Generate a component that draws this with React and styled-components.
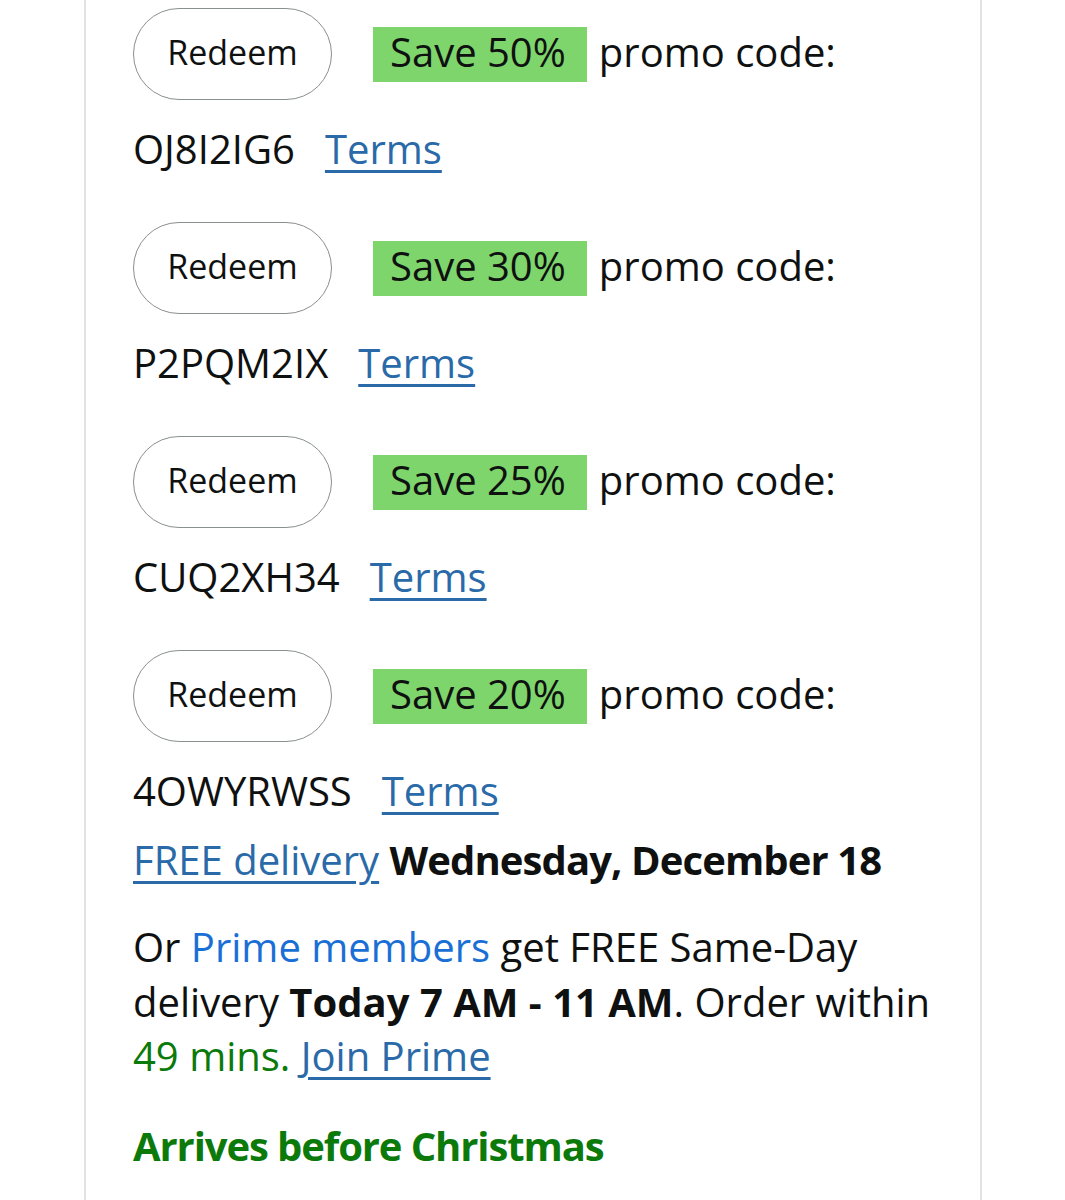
import React from 'react';
import styled, { createGlobalStyle } from 'styled-components';

const promos = [
  { save: 'Save 50%', code: 'OJ8I2IG6' },
  { save: 'Save 30%', code: 'P2PQM2IX' },
  { save: 'Save 25%', code: 'CUQ2XH34' },
  { save: 'Save 20%', code: '4OWYRWSS' },
];

const App = () => {
  return (
    <Page>
      <GlobalStyle />
      <Panel>
        <PromoList>
          {promos.map((promo) => (
            <Promo key={promo.code}>
              <PromoRow>
                <RedeemButton type='button'>Redeem</RedeemButton>
                <SaveBadge>{promo.save}</SaveBadge>
                <PromoLabel>promo code:</PromoLabel>
              </PromoRow>
              <CodeLine>
                <Code>{promo.code}</Code>
                <Link href='#'>Terms</Link>
              </CodeLine>
            </Promo>
          ))}
        </PromoList>
        <DeliveryLine>
          <Link href='#'>FREE delivery</Link> <DateText>Wednesday, December 18</DateText>
        </DeliveryLine>
        <PrimeText>
          Or <PrimeLink>Prime members</PrimeLink> get FREE Same-Day delivery{' '}
          <Bold>Today 7 AM - 11 AM</Bold>. Order within{' '}
          <GreenText>49 mins.</GreenText> <Link href='#'>Join Prime</Link>
        </PrimeText>
        <Arrives>Arrives before Christmas</Arrives>
      </Panel>
    </Page>
  );
};

const GlobalStyle = createGlobalStyle`
  body {
    margin: 0;
    background: #ffffff;
    font-family: "Open Sans", "Noto Sans", "Liberation Sans", sans-serif;
    color: #0f1111;
  }
`;

const Page = styled.div`
  height: 1200px;
  overflow: hidden;
`;

const Panel = styled.div`
  margin-left: 84px;
  width: 898px;
  min-height: 1200px;
  box-sizing: border-box;
  border-left: 2px solid #dfe3e3;
  border-right: 2px solid #dfe3e3;
  padding: 8px 0 0 47px;
  font-size: 40px;
  line-height: 55px;
`;

const PromoList = styled.div`
  display: flex;
  flex-direction: column;
  gap: 44px;
  margin-bottom: 12px;
`;

const Promo = styled.div``;

const PromoRow = styled.div`
  display: flex;
  align-items: center;
  height: 92px;
`;

const RedeemButton = styled.button`
  width: 199px;
  height: 92px;
  border: 1.5px solid #8a8f8f;
  border-radius: 46px;
  background: #ffffff;
  font-family: inherit;
  font-size: 34px;
  color: #0f1111;
  padding: 0 0 5px;
  margin-right: 41px;
`;

const SaveBadge = styled.span`
  background: #7ed56c;
  height: 55px;
  box-sizing: border-box;
  padding: 0 21px 5px 17px;
  display: flex;
  align-items: center;
  margin-right: 12px;
`;

const PromoLabel = styled.span`
  padding-bottom: 6px;
`;

const CodeLine = styled.div`
  margin-top: 22px;
  height: 56px;
  display: flex;
  align-items: center;
  gap: 30px;
  padding-bottom: 3px;
  box-sizing: border-box;
`;

const Code = styled.span``;

const Link = styled.a`
  color: #2a6aa8;
  text-decoration: underline;
  text-decoration-thickness: 3px;
  text-underline-offset: 6px;
`;

const Bold = styled.span`
  font-weight: 700;
`;

const DateText = styled(Bold)`
  letter-spacing: -0.9px;
`;

const DeliveryLine = styled.div`
  line-height: 56px;
`;

const PrimeText = styled.p`
  margin: 32px 0 0;
  width: 810px;
  line-height: 54.5px;
`;

const PrimeLink = styled.span`
  color: #1a6fd6;
`;

const GreenText = styled.span`
  color: #0b7a0b;
`;

const Arrives = styled.div`
  margin-top: 34px;
  color: #0b7a0b;
  font-weight: 700;
  letter-spacing: -1.1px;
`;

export default App;
